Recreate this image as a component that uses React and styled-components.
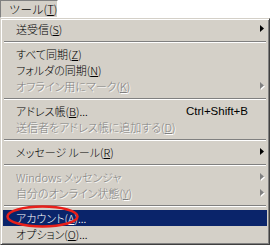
import React from "react";
import styled, { createGlobalStyle, css } from "styled-components";

const Global = createGlobalStyle`
  html, body { margin: 0; padding: 0; background: #ffffff; }
  body {
    font-family: "Noto Sans CJK JP", "Liberation Sans", sans-serif;
    font-size: 11px;
    font-weight: 300;
  }
`;

const Page = styled.div`
  position: relative;
  width: 270px;
  height: 245px;
  overflow: hidden;
  background: #ffffff;
`;

const MenuBarItem = styled.div`
  box-sizing: border-box;
  width: 58px;
  height: 18px;
  background: #d4d0c8;
  border-top: 1px solid #808080;
  border-left: 1px solid #808080;
  border-right: 1px solid #ffffff;
  border-bottom: 1px solid #ffffff;
  padding-left: 8px;
  line-height: 16px;
  font-size: 11.5px;
  color: #000;
  white-space: nowrap;
`;

const Menu = styled.div`
  box-sizing: border-box;
  width: 270px;
  height: 227px;
  background: #d4d0c8;
  border-top: 1px solid #d4d0c8;
  border-left: 1px solid #d4d0c8;
  border-right: 1px solid #404040;
  border-bottom: 1px solid #404040;
  box-shadow: inset 1px 1px 0 #ffffff, inset -1px -1px 0 #808080;
  padding: 2px;
  display: flex;
  flex-direction: column;
`;

const Row = styled.div`
  height: 16px;
  line-height: 16px;
  display: grid;
  grid-template-columns: 1fr auto 19px;
  align-items: center;
  padding-left: 13px;
  white-space: nowrap;
  color: #000;
  ${(p) =>
    p.$active &&
    css`
      background: #0a246a;
      color: #ffffff;
    `}
  ${(p) =>
    p.$disabled &&
    css`
      color: #808080;
      text-shadow: 1px 1px 0 #ffffff;
    `}
`;

const Label = styled.span`
  font-feature-settings: "palt" 1;
`;

const Shortcut = styled.span`
  font-family: "Liberation Sans", sans-serif;
  font-weight: 400;
  font-size: 11.5px;
`;

const ArrowCell = styled.span`
  display: flex;
  align-items: center;
  justify-content: flex-start;
  padding-left: 12px;
  height: 16px;
`;

const Separator = styled.div`
  height: 9px;
  display: flex;
  align-items: center;
  padding: 0 1px;
  &::after {
    content: "";
    flex: 1;
    height: 0;
    border-top: 1px solid #808080;
    border-bottom: 1px solid #ffffff;
  }
`;

const Ellipse = styled.svg`
  position: absolute;
  left: 4px;
  top: 203px;
  pointer-events: none;
`;

function Arrow({ disabled }) {
  if (disabled) {
    return (
      <svg width="6" height="8" viewBox="0 0 6 8">
        <path d="M1 1 L5 4.5 L1 8 Z" fill="#ffffff" />
        <path d="M0 0 L4 3.5 L0 7 Z" fill="#808080" />
      </svg>
    );
  }
  return (
    <svg width="6" height="8" viewBox="0 0 6 8">
      <path d="M0 0 L4 3.5 L0 7 Z" fill="#000000" />
    </svg>
  );
}

function Item({ children, shortcut, submenu, disabled, active }) {
  return (
    <Row $disabled={disabled} $active={active}>
      <Label>{children}</Label>
      <Shortcut>{shortcut}</Shortcut>
      <ArrowCell>{submenu && <Arrow disabled={disabled} />}</ArrowCell>
    </Row>
  );
}

export default function App() {
  return (
    <Page>
      <Global />
      <MenuBarItem>
        ツール(<u>T</u>)
      </MenuBarItem>
      <Menu>
        <Item submenu>
          送受信(<u>S</u>)
        </Item>
        <Separator />
        <Item>
          すべて同期(<u>Z</u>)
        </Item>
        <Item>
          フォルダの同期(<u>N</u>)
        </Item>
        <Item submenu disabled>
          オフライン用にマーク(<u>K</u>)
        </Item>
        <Separator />
        <Item shortcut="Ctrl+Shift+B">
          アドレス帳(<u>B</u>)...
        </Item>
        <Item disabled>
          送信者をアドレス帳に追加する(<u>D</u>)
        </Item>
        <Separator />
        <Item submenu>
          メッセージ ルール(<u>R</u>)
        </Item>
        <Separator />
        <Item submenu disabled>
          Windows メッセンジャ
        </Item>
        <Item submenu disabled>
          自分のオンライン状態(<u>Y</u>)
        </Item>
        <Separator />
        <Item active>
          アカウント(<u>A</u>)...
        </Item>
        <Item>
          オプション(<u>O</u>)...
        </Item>
      </Menu>
      <Ellipse width="80" height="28" viewBox="0 0 80 28">
        <ellipse cx="38.5" cy="13.5" rx="35" ry="10" fill="none" stroke="#e8201a" strokeWidth="2.6" />
      </Ellipse>
    </Page>
  );
}
